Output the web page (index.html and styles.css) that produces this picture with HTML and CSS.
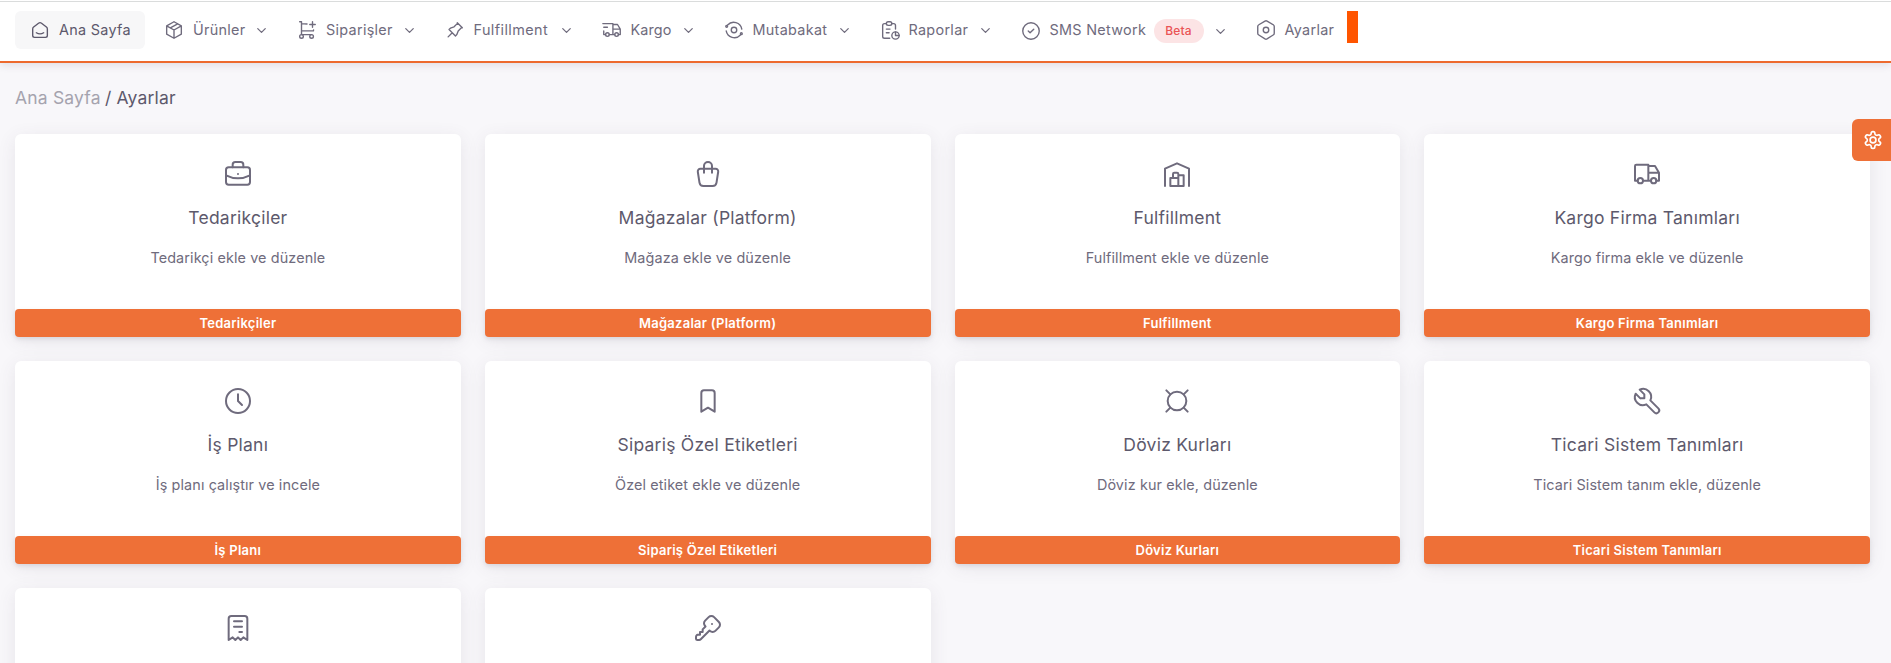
FILE: index.html
```html
<!DOCTYPE html>
<html lang="tr">
<head>
<meta charset="utf-8">
<title>Ayarlar</title>
<link rel="stylesheet" href="styles.css">
</head>
<body>
<header class="topbar">
  <nav class="menu">
    <a class="item active"><svg class="icon" viewBox="0 0 24 24"><path d="M19 8.71l-5.333-4.148a2.666 2.666 0 0 0-3.274 0L5.059 8.71a2.665 2.665 0 0 0-1.029 2.105v7.2a2 2 0 0 0 2 2h12a2 2 0 0 0 2-2v-7.2c0-.823-.38-1.6-1.03-2.105M16 15c-2.21 1.333-5.792 1.333-8 0"/></svg><span class="label w-home">Ana Sayfa</span></a>
    <a class="item"><svg class="icon" viewBox="0 0 24 24"><path d="M12 3l8 4.5v9L12 21l-8-4.5v-9L12 3M12 12l8-4.5M12 12v9M12 12L4 7.5M16 5.25l-8 4.5"/></svg><span class="label w-products">Ürünler</span><svg class="chev" viewBox="0 0 24 24"><path d="M6 9l6 6l6-6"/></svg></a>
    <a class="item"><svg class="icon" viewBox="0 0 24 24"><circle cx="6" cy="19" r="2"/><circle cx="17" cy="19" r="2"/><path d="M17 17H6V3H4M6 5l6.005.429M19.143 12.002L19 13H6M15 6h6M18 3v6"/></svg><span class="label w-orders">Siparişler</span><svg class="chev" viewBox="0 0 24 24"><path d="M6 9l6 6l6-6"/></svg></a>
    <a class="item"><svg class="icon" viewBox="0 0 24 24"><path d="M15 4.5l-4 4L7 10l-1.500 1.500l7 7L14 17l1.500-4l4-4M9 15l-4.500 4.500M14.500 4L20 9.500"/></svg><span class="label w-fulfil">Fulfillment</span><svg class="chev" viewBox="0 0 24 24"><path d="M6 9l6 6l6-6"/></svg></a>
    <a class="item"><svg class="icon" viewBox="0 0 24 24"><circle cx="7" cy="17" r="2"/><circle cx="17" cy="17" r="2"/><path d="M5 17H3v-4M2 5h11v12M9 17h6M19 17h2v-6h-8M13 6h5l3 5M3 9h4"/></svg><span class="label w-cargo">Kargo</span><svg class="chev" viewBox="0 0 24 24"><path d="M6 9l6 6l6-6"/></svg></a>
    <a class="item"><svg class="icon" viewBox="0 0 24 24"><circle cx="12" cy="12" r="3"/><circle cx="4" cy="8" r="1"/><circle cx="20" cy="16" r="1"/><path d="M20.500 11A9 9 0 0 0 5 6.500M3.500 13A9 9 0 0 0 19 17.500"/></svg><span class="label w-recon">Mutabakat</span><svg class="chev" viewBox="0 0 24 24"><path d="M6 9l6 6l6-6"/></svg></a>
    <a class="item"><svg class="icon" viewBox="0 0 24 24"><path d="M8 5H6a2 2 0 0 0-2 2v12a2 2 0 0 0 2 2h5.697M18 14v4h4M18 11V7a2 2 0 0 0-2-2h-2M11 15H8M8 11h4"/><rect x="8" y="3" width="6" height="4" rx="2"/><circle cx="18" cy="18" r="4"/></svg><span class="label w-reports">Raporlar</span><svg class="chev" viewBox="0 0 24 24"><path d="M6 9l6 6l6-6"/></svg></a>
    <a class="item"><svg class="icon low" viewBox="0 0 24 24"><circle cx="12" cy="12" r="9"/><path d="M9 12l2 2l4-4"/></svg><span class="label w-sms">SMS Network</span><span class="badge">Beta</span><svg class="chev low" viewBox="0 0 24 24"><path d="M6 9l6 6l6-6"/></svg></a>
    <a class="item"><svg class="icon" viewBox="0 0 24 24"><path d="M19.875 6.270c.7.398 1.130 1.143 1.125 1.948v7.284c0 .809-.443 1.555-1.158 1.948l-6.750 4.270a2.269 2.269 0 0 1-2.184 0l-6.750-4.270A2.225 2.225 0 0 1 3 15.502V8.217c0-.809.443-1.554 1.158-1.947l6.750-3.980a2.330 2.330 0 0 1 2.250 0l6.750 3.980z"/><circle cx="12" cy="12" r="3"/></svg><span class="label w-settings">Ayarlar</span></a>
    <span class="marker"></span>
  </nav>
</header>
<main class="page">
  <h4 class="crumbs"><span class="parent">Ana Sayfa</span><span class="sep">/</span><span class="here">Ayarlar</span></h4>
  <section class="grid">
    <article class="card"><svg class="glyph" viewBox="0 0 24 24"><rect x="3" y="7" width="18" height="13" rx="2"/><path d="M8 7V5a2 2 0 0 1 2-2h4a2 2 0 0 1 2 2v2M12 12v.01M3 13a20 20 0 0 0 18 0"/></svg><h5>Tedarikçiler</h5><p>Tedarikçi ekle ve düzenle</p><a class="btn">Tedarikçiler</a></article>
    <article class="card"><svg class="glyph" viewBox="0 0 24 24"><path d="M6.331 8H17.670a2 2 0 0 1 1.977 2.304l-1.255 8.152A3 3 0 0 1 15.426 21H8.574a3 3 0 0 1-2.965-2.544l-1.255-8.152A2 2 0 0 1 6.331 8zM9 11V6a3 3 0 0 1 6 0v5"/></svg><h5>Mağazalar (Platform)</h5><p>Mağaza ekle ve düzenle</p><a class="btn">Mağazalar (Platform)</a></article>
    <article class="card"><svg class="glyph" viewBox="0 0 24 24"><path d="M3 21V8l9-4l9 4v13M13 13h4v8H7v-6h6M13 21v-9a1 1 0 0 0-1-1h-2a1 1 0 0 0-1 1v3"/></svg><h5>Fulfillment</h5><p>Fulfillment ekle ve düzenle</p><a class="btn">Fulfillment</a></article>
    <article class="card"><svg class="glyph" viewBox="0 0 24 24"><circle cx="7" cy="17" r="2"/><circle cx="17" cy="17" r="2"/><path d="M5 17H3V6a1 1 0 0 1 1-1h9v12M9 17h6M19 17h2v-6h-8M13 6h5l3 5"/></svg><h5>Kargo Firma Tanımları</h5><p>Kargo firma ekle ve düzenle</p><a class="btn">Kargo Firma Tanımları</a></article>
    <article class="card"><svg class="glyph" viewBox="0 0 24 24"><circle cx="12" cy="12" r="9"/><path d="M12 7v5l3 3"/></svg><h5>İş Planı</h5><p>İş planı çalıştır ve incele</p><a class="btn">İş Planı</a></article>
    <article class="card"><svg class="glyph" viewBox="0 0 24 24"><path d="M9 4h6a2 2 0 0 1 2 2v14l-5-3l-5 3V6a2 2 0 0 1 2-2"/></svg><h5>Sipariş Özel Etiketleri</h5><p>Özel etiket ekle ve düzenle</p><a class="btn">Sipariş Özel Etiketleri</a></article>
    <article class="card"><svg class="glyph" viewBox="0 0 24 24"><circle cx="12" cy="12" r="7"/><path d="M4 4l3 3M20 4l-3 3M4 20l3-3M20 20l-3-3"/></svg><h5>Döviz Kurları</h5><p>Döviz kur ekle, düzenle</p><a class="btn">Döviz Kurları</a></article>
    <article class="card"><svg class="glyph" viewBox="0 0 24 24"><path d="M7 10h3V7L6.500 3.500a6 6 0 0 1 8 8l6 6a2 2 0 0 1-3 3l-6-6a6 6 0 0 1-8-8L7 10"/></svg><h5>Ticari Sistem Tanımları</h5><p>Ticari Sistem tanım ekle, düzenle</p><a class="btn">Ticari Sistem Tanımları</a></article>
    <article class="card"><svg class="glyph" viewBox="0 0 24 24"><path d="M5 21V5a2 2 0 0 1 2-2h10a2 2 0 0 1 2 2v16l-3-2l-2 2l-2-2l-2 2l-2-2l-3 2M9 7h6M9 11h6M13 15h2"/></svg></article>
    <article class="card"><svg class="glyph" viewBox="0 0 24 24"><path d="M16.555 3.843l3.602 3.602a2.877 2.877 0 0 1 0 4.069l-2.643 2.643a2.877 2.877 0 0 1-4.069 0l-.301-.301l-6.558 6.558a2 2 0 0 1-1.239.578l-.175.008H4a1 1 0 0 1-.993-.883L3 20v-1.172a2 2 0 0 1 .467-1.284l.119-.13L4 17h2v-2h2v-2l2.144-2.144l-.301-.301a2.877 2.877 0 0 1 0-4.069l2.643-2.643a2.877 2.877 0 0 1 4.069 0zM15 9h.01"/></svg></article>
  </section>
</main>
<button class="customizer" aria-label="Ayarlar"><svg viewBox="0 0 24 24"><path d="M12.220 2h-.44a2 2 0 0 0-2 2v.18a2 2 0 0 1-1 1.730l-.43.25a2 2 0 0 1-2 0l-.15-.08a2 2 0 0 0-2.730.73l-.22.38a2 2 0 0 0 .73 2.730l.15.1a2 2 0 0 1 1 1.720v.51a2 2 0 0 1-1 1.740l-.15.09a2 2 0 0 0-.73 2.730l.22.38a2 2 0 0 0 2.730.73l.15-.08a2 2 0 0 1 2 0l.43.25a2 2 0 0 1 1 1.730V20a2 2 0 0 0 2 2h.44a2 2 0 0 0 2-2v-.18a2 2 0 0 1 1-1.730l.43-.25a2 2 0 0 1 2 0l.15.08a2 2 0 0 0 2.730-.73l.22-.39a2 2 0 0 0-.73-2.730l-.15-.08a2 2 0 0 1-1-1.740v-.5a2 2 0 0 1 1-1.740l.15-.09a2 2 0 0 0 .73-2.730l-.22-.38a2 2 0 0 0-2.730-.73l-.15.08a2 2 0 0 1-2 0l-.43-.25a2 2 0 0 1-1-1.730V4a2 2 0 0 0-2-2z"/><circle cx="12" cy="12" r="3.500"/></svg></button>
</body>
</html>
```
FILE: styles.css
```css
* { box-sizing: border-box; }
html, body { height: 100%; }
body {
  margin: 0;
  overflow: hidden;
  background: #f8f7fa;
  color: #6f6b7d;
  font-family: Inter, "Noto Sans", sans-serif;
  font-size: 14.4px;
}
svg { fill: none; stroke: currentColor; stroke-width: 1.5; stroke-linecap: round; stroke-linejoin: round; flex: none; }
.topbar {
  height: 63px;
  background: #fff;
  border-bottom: 2px solid #ed6a2e;
  box-shadow: 0 2px 8px rgba(75, 70, 92, .14);
}
.topbar::before { content: ""; display: block; height: 1px; border-bottom: 1px solid #dadcdc; }
.menu { display: flex; align-items: flex-start; gap: 4px; padding: 9px 15px 0; }
.item { display: flex; align-items: center; height: 38px; padding-left: 14px; border-radius: 6px; white-space: nowrap; }
.active { background: #f7f7f8; padding-right: 14px; color: #5d596c; }
.icon { width: 22px; height: 22px; margin-right: 8px; }
.low { margin-top: 2px; }
.label { line-height: 22px; letter-spacing: .3px; }
.chev { width: 15px; height: 15px; margin-left: 9px; margin-right: 9px; stroke-width: 2; }
.w-home { width: 72px; }
.w-products { width: 52px; }
.w-orders { width: 66.500px; }
.w-fulfil { width: 76px; letter-spacing: .42px; }
.w-cargo { width: 41px; letter-spacing: .1px; }
.w-recon { width: 75px; }
.w-reports { width: 60px; }
.w-sms { width: 96px; }
.w-settings { width: 51px; }
.badge {
  margin: 2px 0 0 8px;
  width: 50px;
  height: 24px;
  border-radius: 12px;
  background: #fce4e5;
  color: #ea5455;
  font-size: 12px;
  font-weight: 500;
  line-height: 24px;
  letter-spacing: .2px;
  text-align: center;
}
.marker { width: 11px; height: 32px; margin-left: 7px; background: #ff5500; }
.page { padding: 22px 21px 0 15px; }
.crumbs { display: flex; height: 26px; margin: 0 0 23px; font-size: 17.500px; font-weight: 400; line-height: 26px; letter-spacing: .18px; color: #5d596c; }
.parent { color: #a5a3ae; width: 86px; }
.sep { margin: 0 5px 0 4px; }
.grid { display: grid; grid-template-columns: repeat(4, 1fr); grid-auto-rows: 203px; gap: 24px; }
.card {
  display: flex;
  flex-direction: column;
  align-items: center;
  padding-top: 24px;
  background: #fff;
  border-radius: 6px;
  box-shadow: 0 4px 18px rgba(75, 70, 92, .1);
}
.glyph { width: 32px; height: 32px; }
h5 { margin: 16px 0 0; font-size: 17.500px; font-weight: 400; line-height: 24px; letter-spacing: .24px; color: #5d596c; }
p { margin: 17px 0 0; line-height: 22px; letter-spacing: .11px; }
.btn {
  margin-top: auto;
  width: 100%;
  height: 28px;
  border-radius: 4px;
  background: #ee7037;
  box-shadow: 0 2px 4px rgba(165, 163, 174, .3);
  color: #fff;
  font-size: 13px;
  font-weight: 600;
  line-height: 29px;
  letter-spacing: .26px;
  text-align: center;
}
.customizer {
  position: fixed;
  top: 119px;
  right: 0;
  display: flex;
  align-items: center;
  justify-content: center;
  width: 39px;
  height: 42px;
  padding: 0 0 0 3px;
  border: 0;
  border-radius: 6px 0 0 6px;
  background: #ee7037;
  color: #fff;
}
.customizer svg { width: 20px; height: 20px; stroke-width: 2; }
```
